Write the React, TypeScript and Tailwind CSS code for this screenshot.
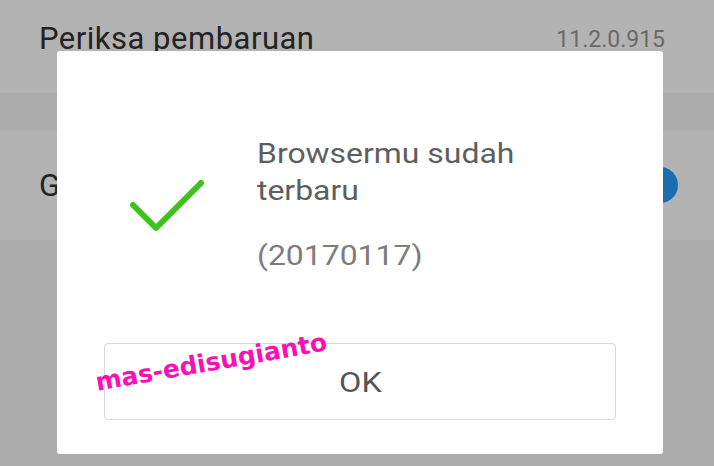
import React from "react";

export default function App() {
  return (
    <div
      className="relative w-[714px] h-[466px] overflow-hidden bg-[#acacac]"
      style={{ fontFamily: "Roboto, 'Noto Sans', sans-serif" }}
    >
      {/* background settings list (dimmed) */}
      <div className="flex flex-col">
        <div className="h-[93px] bg-[#b3b3b3] flex items-start justify-between pl-[39px] pr-[49px] pt-[20px]">
          <span className="text-[31px] leading-[37px] tracking-[0.5px] text-[#232323]">Periksa pembaruan</span>
          <span className="text-[23px] leading-[28px] text-[#6a6a6a] mt-[6px]">11.2.0.915</span>
        </div>
        <div className="h-[37px] bg-[#acacac]" />
        <div className="h-[110px] bg-[#b3b3b3] flex items-center justify-between pl-[39px] pr-[36px]">
          <span className="text-[31px] leading-[37px] text-[#232323]">G</span>
          <div className="w-[36px] h-[36px] rounded-full bg-[#1b6db0]" />
        </div>
        <div className="h-[226px] bg-[#acacac]" />
      </div>

      {/* dialog */}
      <div className="absolute left-[57px] top-[51px] w-[606px] h-[403px] bg-white rounded-[3px] flex flex-col px-[47px] pb-[34px]">
        <div className="flex-1 flex items-start pt-[84px]">
          <div className="w-[153px] pl-[26px] pt-[45px]">
            <svg width="74" height="56" viewBox="0 0 74 56">
              <path
                d="M3 25 L26 48 L71 3"
                fill="none"
                stroke="#3ec21d"
                strokeWidth="6"
                strokeLinecap="round"
                strokeLinejoin="round"
              />
            </svg>
          </div>
          <div className="flex flex-col w-[260px]">
            <p className="text-[28px] leading-[37px] text-[#5e5e5e] origin-left scale-x-[1.14]">
              Browsermu sudah terbaru
            </p>
            <p className="text-[28px] leading-[37px] text-[#7d7d7d] mt-[28px] origin-left scale-x-[1.14]">
              (20170117)
            </p>
          </div>
        </div>
        <button className="h-[77px] w-full border-[1.5px] border-[#d8d8d8] rounded-[4px] bg-white flex items-center justify-center text-[28px] text-[#555555]">
          <span className="inline-block scale-x-[1.16] mt-[2px]">OK</span>
        </button>
      </div>

      {/* watermark */}
      <div
        className="absolute left-[94px] top-[348px] w-[230px] text-center text-[25px] leading-[30px] font-bold text-[#fb10b6] -rotate-[10deg] whitespace-nowrap"
        style={{ fontFamily: "'DejaVu Sans', sans-serif" }}
      >
        mas-edisugianto
      </div>
    </div>
  );
}
